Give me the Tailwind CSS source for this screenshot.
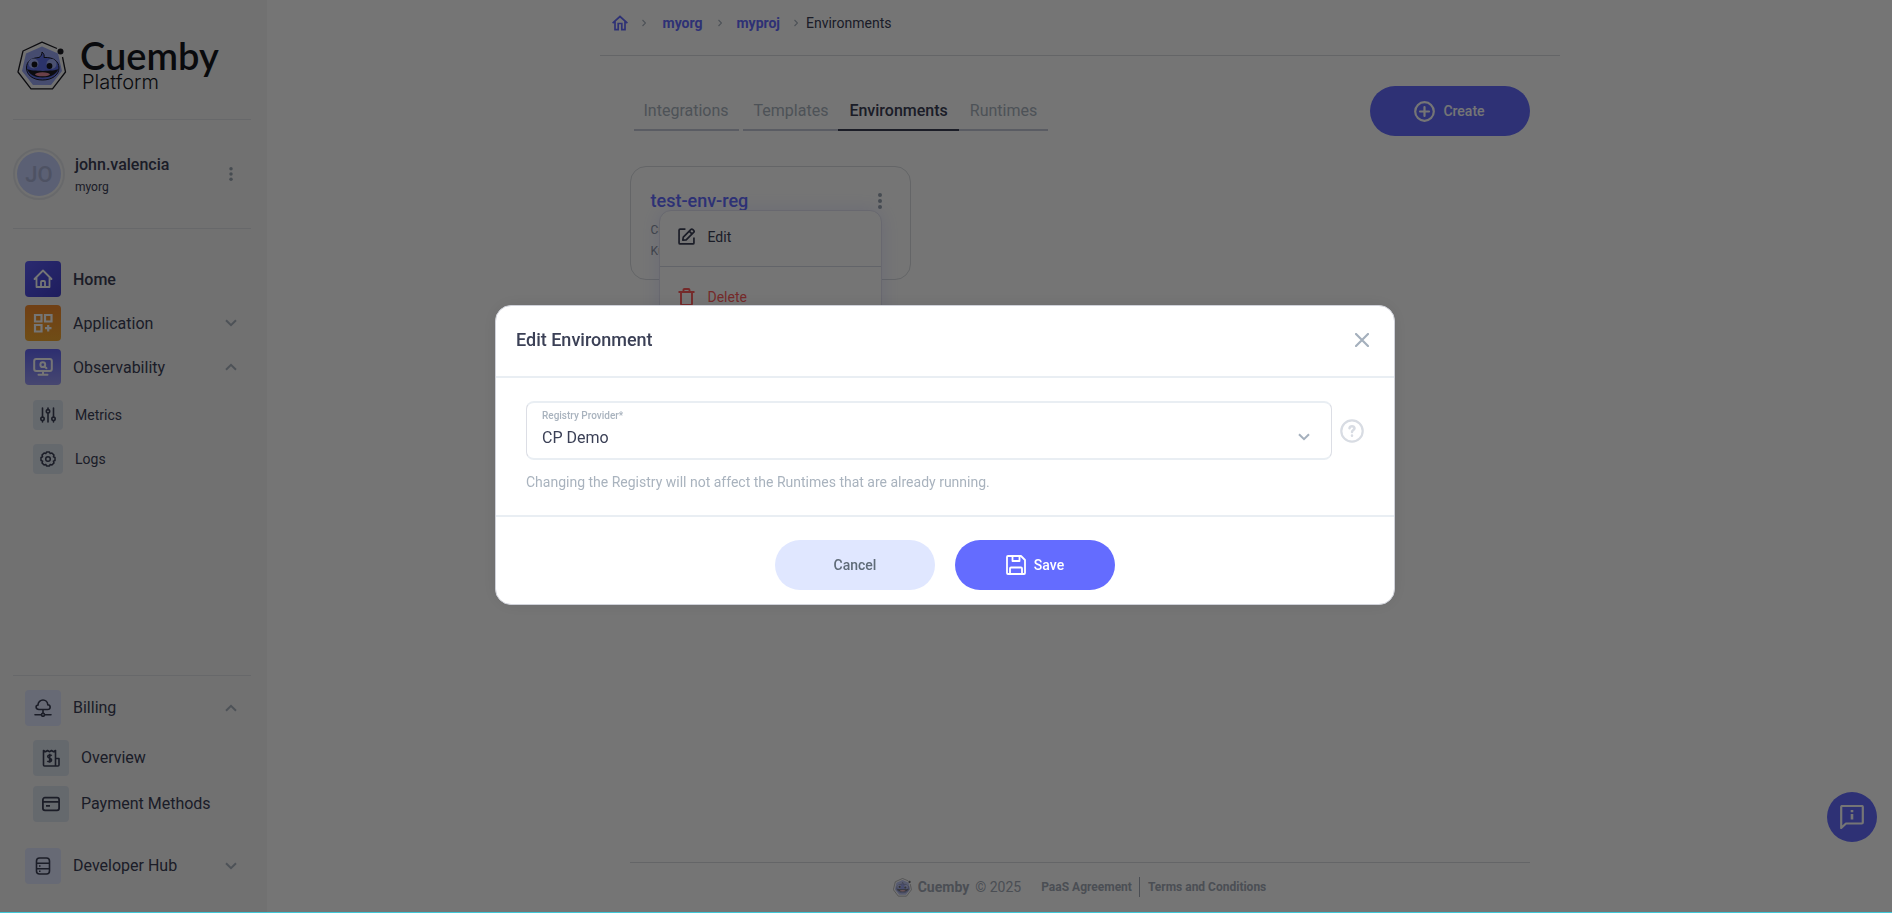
<!DOCTYPE html>
<html lang="en">
<head>
<meta charset="utf-8">
<meta name="viewport" content="width=device-width, initial-scale=1">
<title>Cuemby Platform - Environments</title>
<script src="https://cdn.jsdelivr.net/npm/@tailwindcss/browser@4"></script>
</head>
<body class="font-[Roboto,sans-serif] text-[#3b4056] bg-white">
<svg class="hidden" aria-hidden="true">
  <symbol id="down" viewBox="0 0 12 8"><path d="M1 1.200l5 5 5-5" fill="none" stroke="currentColor" stroke-width="2"/></symbol>
  <symbol id="up" viewBox="0 0 12 8"><path d="M1 6.800l5-5 5 5" fill="none" stroke="currentColor" stroke-width="2"/></symbol>
  <symbol id="dots" viewBox="0 0 4 16"><circle cx="2" cy="2" r="2"/><circle cx="2" cy="8" r="2"/><circle cx="2" cy="14" r="2"/></symbol>
  <symbol id="mascot" viewBox="0 0 50 50">
    <path d="M40 7.500L25 1.200 6 10 1 31 14 47.800H35.500L48.500 31 45.500 16" fill="none" stroke="#1b1b22" stroke-width="1.300" stroke-linejoin="round"/>
    <path d="M25 5.500L9 12.500 5 30 16 44H34L45 30 41 12.500z" fill="#98a5f2"/>
    <circle cx="43.500" cy="10.500" r="3" fill="#1b1b22"/>
    <path d="M22 16.500c2-1 3-3 3-5.500 2 1.500 2.500 3.500 2 5.500 9-.5 15 3.500 15 10.500 0 7-7 12-16.500 12S9.500 34 9.500 27c0-7 5-10 12.500-10.500z" fill="#5f70e6" stroke="#1b1b22" stroke-width="1"/>
    <path d="M10 28c5 2.500 27 2.500 31.500 0-2 5-8 8.500-16 8.500S12 33 10 28z" fill="#1b1b22"/>
    <ellipse cx="25.500" cy="33.300" rx="7.500" ry="2" fill="#e88ca0"/>
    <ellipse cx="16.500" cy="22.500" rx="5" ry="5" fill="#a3b0f6"/><ellipse cx="34.500" cy="23" rx="5" ry="5" fill="#a3b0f6"/>
    <circle cx="17.500" cy="23.500" r="2.900" fill="#15151c"/><circle cx="32.500" cy="25" r="2.900" fill="#15151c"/>
  </symbol>
</svg>

<div class="flex min-h-screen">
  <aside class="w-[267px] shrink-0 bg-[#f6f6f7] flex flex-col pl-[13px] pr-4">
    <div class="h-[120px] border-b border-[#e0e3e8] flex pt-10 pl-1">
      <svg class="w-[50px] h-[50px] mt-px shrink-0"><use href="#mascot"/></svg>
      <div class="pl-[13px] text-[#15161d]">
        <div class="text-[38px] leading-[30px] font-semibold font-[Lato,sans-serif]">Cuemby</div>
        <div class="text-[20px] leading-[25px] pl-0.5 font-light font-[Inter,sans-serif]">Platform</div>
      </div>
    </div>
    <div class="h-[109px] border-b border-[#e0e3e8] flex items-center">
      <div class="size-[52px] rounded-full border-2 border-[#e3e5ea] p-0.5"><div class="size-full rounded-full bg-[#c6d1fc] text-[#aab4d8] text-[22px] font-medium flex items-center justify-center">JO</div></div>
      <div class="pl-2.5 pt-0.5 flex-1"><div class="text-base leading-6 font-medium">john.valencia</div><div class="text-xs leading-5">myorg</div></div>
      <button aria-label="Account menu" class="mr-[18px] text-[#9aa5b1]"><svg class="w-1 h-3.5 fill-current"><use href="#dots"/></svg></button>
    </div>
    <nav class="pt-8 pl-3 flex flex-col gap-2">
      <a href="#" class="flex items-center gap-3 font-medium"><span class="size-9 rounded bg-gradient-to-br from-[#5c5cf4] to-[#4340cc] flex items-center justify-center"><svg class="size-5" viewBox="0 0 20 20" fill="none" stroke="#fff" stroke-width="1.800" stroke-linejoin="round" stroke-linecap="round"><path d="M1.500 10L10 1.500l8.500 8.500M3.500 8.500v9.500h13V8.500M8 18v-5q0-1 1-1h2q1 0 1 1v5"/></svg></span><span class="pt-px">Home</span></a>
      <a href="#" class="flex items-center gap-3"><span class="size-9 rounded bg-gradient-to-b from-[#f58a2e] to-[#f2a830] flex items-center justify-center"><svg class="size-5" viewBox="0 0 20 20" fill="none" stroke="#fff" stroke-width="2.200"><path d="M2 2h6.500v6.500H2zM12 2h6.500v6.500H12zM2 12h6.500v6.500H2zM15.200 12v6.500M12 15.200h6.500"/></svg></span><span class="flex-1 pt-px">Application</span><svg class="w-3 h-2 mr-3.5 text-[#a9b3be]"><use href="#down"/></svg></a>
      <a href="#" class="flex items-center gap-3"><span class="size-9 rounded bg-gradient-to-b from-[#6466f4] to-[#9a9af4] flex items-center justify-center"><svg class="size-5" viewBox="0 0 20 20" fill="none" stroke="#fff" stroke-width="2" stroke-linecap="round"><rect x="1.200" y="2" width="17.600" height="12" rx="2"/><path d="M10 14v3.500M5.500 17.800h9M11.500 9.500l2 1.700"/><circle cx="9.800" cy="7.700" r="2.400"/></svg></span><span class="flex-1 pt-px">Observability</span><svg class="w-3 h-2 mr-3.5 text-[#a9b3be]"><use href="#up"/></svg></a>
      <div class="pl-2 pt-[7px] flex flex-col gap-3.5 text-sm">
        <a href="#" class="flex items-center gap-3"><span class="size-[30px] rounded bg-[#dde4ee] flex items-center justify-center"><svg class="size-4" viewBox="0 0 16 16" fill="none" stroke="#3b4056" stroke-width="1.600" stroke-linecap="round"><path d="M2.500 1v8.500M2.500 14v1M8 1v1M8 6.500V15M13.500 1v8.500M13.500 14v1"/><circle cx="2.500" cy="11.800" r="1.700"/><circle cx="8" cy="4.300" r="1.700"/><circle cx="13.500" cy="11.800" r="1.700"/></svg></span>Metrics</a>
        <a href="#" class="flex items-center gap-3"><span class="size-[30px] rounded bg-[#dde4ee] flex items-center justify-center"><svg class="size-4" viewBox="0 0 16 16" fill="none" stroke="#3b4056" stroke-width="1.500" stroke-linejoin="round"><path d="M6.500 1H9.500L10.200 2.600 11.900 2 14 4.100 13.400 5.800 15 6.500V9.500L13.400 10.200 14 11.900 11.900 14 10.200 13.400 9.500 15H6.500L5.800 13.400 4.100 14 2 11.900 2.600 10.200 1 9.500V6.500L2.600 5.800 2 4.100 4.100 2 5.800 2.600z"/><circle cx="8" cy="8" r="2.300"/></svg></span>Logs</a>
      </div>
    </nav>
    <nav class="mt-auto border-t border-[#e0e3e8] pt-3.5 pl-3 pb-[29px]">
      <a href="#" class="flex items-center gap-3"><span class="size-9 rounded bg-[#e0e6ff] flex items-center justify-center"><svg class="size-[18px]" viewBox="0 0 18 18" fill="none" stroke="#3b4056" stroke-width="1.600" stroke-linecap="round"><path d="M5 10.500C1.500 10.500 1.200 6.500 4 6 4 3 6.500 1 9 1s4.600 2 4.800 4.800c3.200.2 3.200 4.700-.3 4.700zM9 10.500v3.500M1 15.800h6.300M10.700 15.800H17"/><circle cx="9" cy="15.800" r="1.500"/></svg></span><span class="flex-1">Billing</span><svg class="w-3 h-2 mr-3.5 text-[#a9b3be]"><use href="#up"/></svg></a>
      <a href="#" class="flex items-center gap-3 ml-2 mt-3.5"><span class="size-9 rounded bg-[#dde4ee] flex items-center justify-center"><svg class="size-[18px]" viewBox="0 0 18 18" fill="none" stroke="#3b4056" stroke-width="1.600" stroke-linejoin="round"><path d="M1.500 1.500l2 1.200L5.500 1.500l2 1.200 2-1.200 2 1.200 2-1.200V17H2.500q-1 0-1-1zM13.500 9.500H17V16q0 1-1 1h-2.500M9.700 6.700C9 5.800 5.700 5.500 5.700 7.500S9.600 8.800 9.600 11s-3.500 2-4.200.800M7.700 4.800v9"/></svg></span>Overview</a>
      <a href="#" class="flex items-center gap-3 ml-2 mt-2.5"><span class="size-9 rounded bg-[#dde4ee] flex items-center justify-center"><svg class="size-[18px]" viewBox="0 0 18 18" fill="none" stroke="#3b4056" stroke-width="1.800"><rect x=".900" y="2.700" width="16.200" height="12.600" rx="2"/><path d="M1 6.800h16M4 10.800h4"/></svg></span>Payment Methods</a>
      <a href="#" class="flex items-center gap-3 mt-[26px]"><span class="size-9 rounded bg-[#e0e6ff] flex items-center justify-center"><svg class="size-[18px]" viewBox="0 0 18 18" fill="none" stroke="#3b4056" stroke-width="1.600"><rect x="2.500" y="1" width="13" height="16" rx="3"/><path d="M2.500 6.300h13M2.500 11.700h13M5 9h1.500M5 14.300h1.500"/></svg></span><span class="flex-1">Developer Hub</span><svg class="w-3 h-2 mr-3.5 text-[#a9b3be]"><use href="#down"/></svg></a>
    </nav>
  </aside>

  <main class="flex-1 flex flex-col">
    <div class="w-full max-w-[960px] mx-auto flex-1 flex flex-col">
      <nav aria-label="Breadcrumb" class="h-14 border-b border-[#d9dce0] pl-3 pb-2.5 flex items-center text-sm">
        <a href="#" aria-label="Home" class="text-[#646cff]"><svg class="size-4" viewBox="0 0 16 16" fill="none" stroke="currentColor" stroke-width="1.700"><path d="M.600 8.200L8 1.500l7.400 6.700M3 6.500v8.200h3.200V8.500h3.600v6.200H13V6.500"/></svg></a>
        <svg class="w-1 h-2 ml-3.5 text-[#a9b3be]" viewBox="0 0 4 8" fill="none" stroke="currentColor" stroke-width="1.200"><path d="M.500 1l3 3-3 3"/></svg>
        <a href="#" class="ml-[17px] font-bold text-[#646cff]">myorg</a>
        <svg class="w-1 h-2 ml-4 text-[#a9b3be]" viewBox="0 0 4 8" fill="none" stroke="currentColor" stroke-width="1.200"><path d="M.500 1l3 3-3 3"/></svg>
        <a href="#" class="ml-3.5 font-bold text-[#646cff]">myproj</a>
        <svg class="w-1 h-2 ml-3.5 text-[#a9b3be]" viewBox="0 0 4 8" fill="none" stroke="currentColor" stroke-width="1.200"><path d="M.500 1l3 3-3 3"/></svg>
        <span class="ml-2">Environments</span>
      </nav>
      <div class="mx-[30px] pt-[30px] flex justify-between items-start">
        <div role="tablist" class="ml-1 pt-2 flex text-base text-[#a9b3be]">
          <button role="tab" class="h-[37px] px-2.5 pb-0.5 mr-1 border-b-2 border-[#c5c8d8]">Integrations</button>
          <button role="tab" class="h-[37px] pl-[11px] pr-2.5 pb-0.5 border-b-2 border-[#c5c8d8]">Templates</button>
          <button role="tab" aria-selected="true" class="h-[37px] px-[11px] pb-0.5 border-b-2 border-[#3b4056] text-[#3b4056] font-medium">Environments</button>
          <button role="tab" class="h-[37px] px-[11px] pb-0.5 border-b-2 border-[#c5c8d8]">Runtimes</button>
        </div>
        <button class="w-40 h-[50px] rounded-full bg-[#646cff] text-white text-sm font-medium flex items-center justify-center gap-2"><svg class="size-[21px]" viewBox="0 0 21 21" fill="none" stroke="currentColor" stroke-width="2.200" stroke-linecap="round"><circle cx="10.500" cy="10.500" r="9.300"/><path d="M10.500 6v9M6 10.500h9"/></svg>Create</button>
      </div>
      <div class="relative ml-[30px] mt-[30px] w-[281px] h-[114px] rounded-2xl border border-[#d9dce0] pl-5 pr-7 pt-[22px]">
        <div class="flex justify-between items-center"><a href="#" class="text-lg leading-6 font-medium text-[#646cff]">test-env-reg</a><button aria-label="Environment menu" class="text-[#9aa5b1]"><svg class="w-1 h-4 fill-current"><use href="#dots"/></svg></button></div>
        <p class="text-xs leading-[21px] mt-[7px] text-[#8c95a3]">Cuemby<br>Kubernetes</p>
        <div role="menu" class="absolute left-7 top-[43px] w-[223px] rounded-xl border border-[#e2e3f2] bg-white shadow-[0_0_20px_rgba(100,108,255,0.15)] text-sm">
          <button role="menuitem" class="w-full h-14 pl-[18px] flex items-center gap-[13px] border-b border-[#d6d9e4] pb-1"><svg class="size-[17px]" viewBox="0 0 16 16" fill="none" stroke="currentColor" stroke-width="1.600" stroke-linejoin="round"><path d="M7 1H2q-1 0-1 1v12q0 1 1 1h12q1 0 1-1V9M4.500 11.500l.500-3 7-7q1-1 2 0l.700.700q1 1 0 2l-7 7zM10.500 3l2.600 2.600"/></svg>Edit</button>
          <button role="menuitem" class="w-full h-14 pl-[18px] flex items-center gap-[13px] text-[#ff5c5c] pt-1"><svg class="w-[17px] h-[18px]" viewBox="0 0 17 18" fill="none" stroke="currentColor" stroke-width="1.900"><path d="M.500 4h16M3 4v12q0 1 1 1h9q1 0 1-1V4M5.500 4V2q0-1 1-1h4q1 0 1 1v2"/></svg>Delete</button>
        </div>
      </div>
      <footer class="mt-auto mx-[30px] border-t border-[#d9dce0] h-[51px] flex items-center justify-center pb-0.5 text-xs font-bold text-[#a3abb8]">
        <svg class="size-[19px] opacity-60"><use href="#mascot"/></svg>
        <span class="ml-1.5 text-sm font-bold">Cuemby</span><span class="ml-1.5 text-sm font-normal">© 2025</span>
        <a href="#" class="ml-5 mr-[7px]">PaaS Agreement</a>
        <a href="#" class="border-l border-[#a3abb8] leading-5 pl-2">Terms and Conditions</a>
      </footer>
    </div>
  </main>
</div>

<button aria-label="Support chat" class="fixed right-[15px] bottom-[71px] size-[50px] rounded-full bg-[#646cff] text-white flex items-center justify-center"><svg class="size-6" viewBox="0 0 24 24" fill="none" stroke="currentColor" stroke-width="2.200" stroke-linejoin="round"><path d="M1.200 23V2q0-1 1-1h19.600q1 0 1 1v15.500q0 1-1 1H6z"/><path d="M12 9v5.500M12 5v2.200" stroke-width="2.600"/></svg></button>

<div class="fixed inset-0 bg-black/54 border-b border-[#40c8d8] flex items-center justify-center pr-0.5 pb-0.5">
  <section role="dialog" aria-modal="true" aria-labelledby="dialog-title" class="w-full max-w-[900px] rounded-2xl bg-white border border-[#d0d2da] shadow-[0_0_20px_rgba(0,0,0,0.08)]">
    <header class="h-[72px] border-b-2 border-[#e9eef3] pl-5 pr-[25px] pb-0.5 flex items-center justify-between">
      <h1 id="dialog-title" class="text-lg font-medium">Edit Environment</h1>
      <button aria-label="Close" class="text-[#a5b0bd]"><svg class="size-3.5" viewBox="0 0 14 14" fill="none" stroke="currentColor" stroke-width="2.200" stroke-linecap="round"><path d="M1 1l12 12M13 1L1 13"/></svg></button>
    </header>
    <div class="px-[30px] py-[23px] border-b-2 border-[#e9eef3]">
      <div class="flex items-center gap-2">
        <div class="relative flex-1">
          <label for="registry" class="absolute left-4 top-[9px] text-[10px] leading-3 font-medium text-[#a9b3be]">Registry Provider*</label>
          <select id="registry" class="block w-full h-[59px] appearance-none rounded-lg border-x border-y-2 border-x-[#dcdee5] border-y-[#e9eef3] bg-white pl-[15px] pt-3.5 text-base"><option>CP Demo</option></select>
          <svg class="absolute right-[22px] top-8 w-3 h-2 text-[#a5b0bd] pointer-events-none"><use href="#down"/></svg>
        </div>
        <button aria-label="Help" class="text-[#d8dce3]"><svg class="size-6" viewBox="0 0 24 24" fill="none" stroke="currentColor" stroke-width="2.200" stroke-linecap="round"><circle cx="12" cy="12" r="10.700"/><path d="M9.500 9.200q.300-2 2.500-2t2.500 2c0 1.900-2.500 1.800-2.500 3.800M12 16.500v.2" stroke-width="2.500"/></svg></button>
      </div>
      <p class="mt-3 text-sm leading-5 text-[#a9b3be]">Changing the Registry will not affect the Runtimes that are already running.</p>
    </div>
    <footer class="pt-[23px] pb-3.5 flex justify-center gap-5 text-sm font-medium">
      <button class="w-40 h-[50px] rounded-full bg-[#e0e7ff] text-[#5f6b78]">Cancel</button>
      <button class="w-40 h-[50px] rounded-full bg-[#646cff] text-white flex items-center justify-center gap-2"><svg class="size-5" viewBox="0 0 20 20" fill="none" stroke="currentColor" stroke-width="1.800" stroke-linejoin="round"><path d="M1 2q0-1 1-1h13l4 4v13q0 1-1 1H2q-1 0-1-1zM6.500 1v5h7V1M4 19v-5.500q0-1 1-1h10q1 0 1 1V19"/></svg>Save</button>
    </footer>
  </section>
</div>
</body>
</html>
